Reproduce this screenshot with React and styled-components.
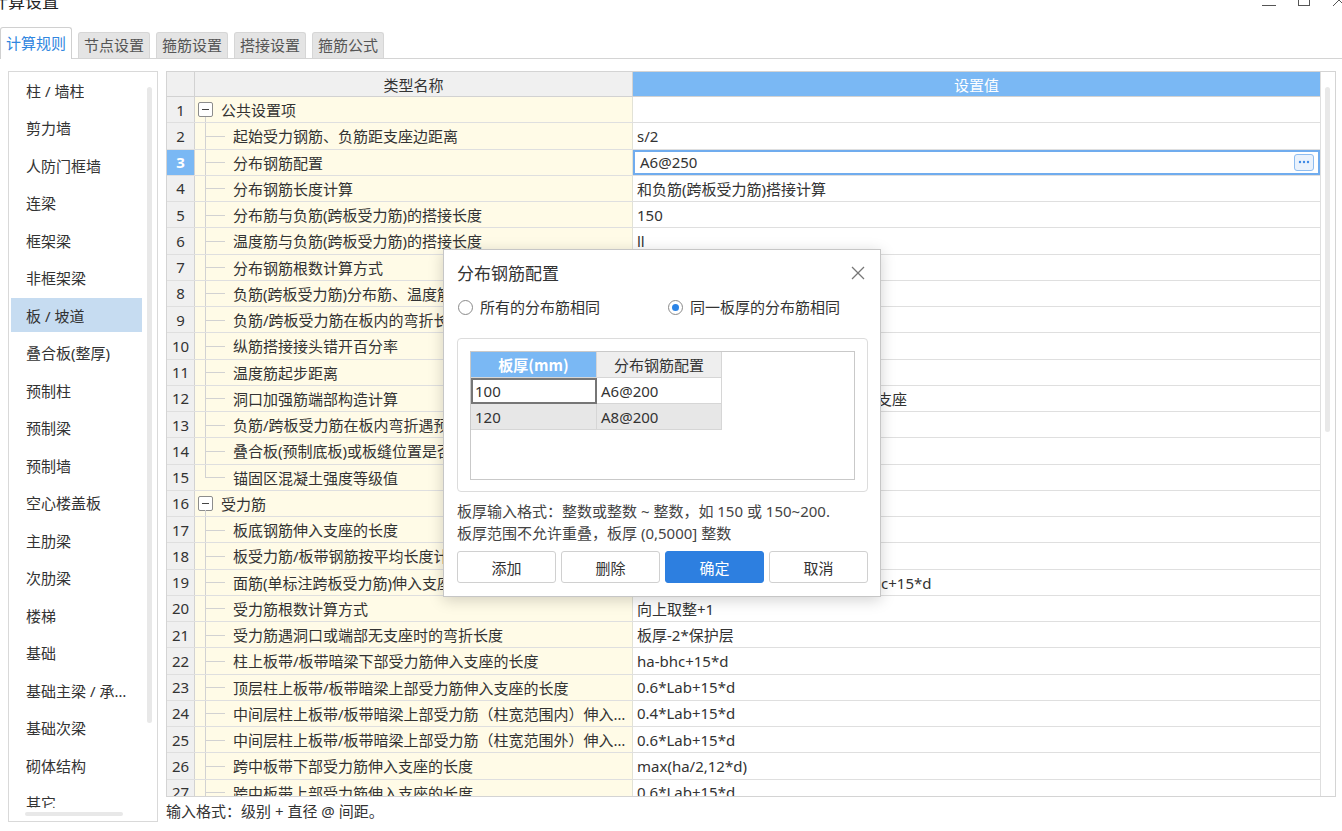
import React from 'react';
import styled, { createGlobalStyle, css } from 'styled-components';

const Global = createGlobalStyle`
  html, body { margin: 0; padding: 0; background: #fff; }
  body {
    font-family: "Noto Sans", "Noto Sans CJK SC", sans-serif;
    color: #333;
    font-size: 15px;
    overflow: hidden;
  }
  * { box-sizing: border-box; }
`;

const Window = styled.div`
  width: 1342px;
  height: 831px;
  position: relative;
  overflow: hidden;
  background: #fff;
  display: flex;
  flex-direction: column;
`;

const TitleBar = styled.div`
  height: 27px;
  flex-shrink: 0;
  display: flex;
  justify-content: space-between;
  align-items: flex-start;
`;

const Title = styled.div`
  font-size: 17px;
  line-height: 20px;
  margin-top: -9px;
  margin-left: -9px;
  color: #222;
  font-family: "Noto Sans CJK SC", sans-serif;
`;

const Controls = styled.div`
  display: flex;
  gap: 21px;
  margin-top: -7px;
  margin-right: -4px;
`;

const TabBar = styled.div`
  height: 32px;
  flex-shrink: 0;
  display: flex;
  align-items: flex-end;
  gap: 6px;
  border-bottom: 1px solid #d4d4d4;
`;

const Tab = styled.div`
  font-size: 15px;
  display: flex;
  align-items: center;
  justify-content: center;
  border: 1px solid #d6d6d6;
  border-bottom: none;
  border-radius: 3px 3px 0 0;
  font-family: "Noto Sans CJK SC", sans-serif;
  ${(p) =>
    p.$active
      ? css`
          height: 32px;
          width: 72px;
          background: #fff;
          color: #2f86e0;
          margin-bottom: -1px;
          border-color: #d0d0d0;
          padding-bottom: 3px;
        `
      : css`
          height: 26px;
          width: 72px;
          background: #e4e4e4;
          color: #555;
          padding-bottom: 2px;
        `}
`;

const Body = styled.div`
  display: flex;
  gap: 8px;
  padding: 12px 6px 0 8px;
  flex: 1;
  min-height: 0;
`;

const Sidebar = styled.div`
  width: 150px;
  height: 751px;
  flex-shrink: 0;
  border: 1px solid #d9d9d9;
  display: grid;
  grid-template-columns: 1fr 12px;
  grid-template-rows: 1fr 13px;
`;

const NavList = styled.div`
  overflow: hidden;
  padding: 1px 0 0 2px;
`;

const NavItem = styled.div`
  width: 131px;
  height: 34px;
  margin-bottom: 3.5px;
  padding: 0 10px 0 15px;
  display: flex;
  align-items: center;
  font-size: 15px;
  color: #333;
  background: ${(p) => (p.$active ? '#c6dcf1' : 'transparent')};
`;

const NavText = styled.span`
  display: block;
  min-width: 0;
  white-space: nowrap;
  overflow: hidden;
  text-overflow: ellipsis;
`;

const VTrack = styled.div`
  padding: 15px 0 0 2px;
`;

const VThumb = styled.div`
  width: 5px;
  height: ${(p) => p.$h}px;
  border-radius: 3px;
  background: #e8e8e8;
`;

const HTrack = styled.div`
  grid-column: 1 / -1;
  padding: 4px 0 0 16px;
`;

const HThumb = styled.div`
  width: 98px;
  height: 4px;
  border-radius: 2px;
  background: #e8e8e8;
`;

const Main = styled.div`
  flex: 1;
  min-width: 0;
  display: flex;
  flex-direction: column;
`;

const TableBox = styled.div`
  height: 726px;
  border: 1px solid #d4d4d4;
  display: flex;
  overflow: hidden;
`;

const Grid = styled.div`
  flex: 1;
  min-width: 0;
  overflow: hidden;
`;

const TableScroll = styled.div`
  width: 15px;
  flex-shrink: 0;
  border-left: 1px solid #dedede;
  padding: 15px 0 0 4px;
`;

const Row = styled.div`
  display: grid;
  grid-template-columns: 28px 438px 1fr;
  height: 26.25px;
  border-bottom: 1px solid #dfdfdf;
`;

const HeaderRow = styled(Row)`
  height: 25px;
  border-bottom-color: #d2d2d2;
`;

const NumCell = styled.div`
  border-right: 1px solid #d2d2d2;
  background: ${(p) => (p.$sel ? '#7ab8f4' : '#f0f0f0')};
  color: ${(p) => (p.$sel ? '#fff' : '#333')};
  font-weight: ${(p) => (p.$sel ? 700 : 400)};
  display: flex;
  align-items: center;
  justify-content: center;
  font-size: 15px;
`;

const HeadCell = styled.div`
  display: flex;
  align-items: center;
  justify-content: center;
  font-size: 15px;
  font-family: "Noto Sans CJK SC", sans-serif;
  background: ${(p) => (p.$blue ? '#7ab8f4' : '#f0f0f0')};
  color: ${(p) => (p.$blue ? '#fff' : '#333')};
  border-right: ${(p) => (p.$blue ? 'none' : '1px solid #d2d2d2')};
`;

const NameCell = styled.div`
  border-right: 1px solid #e2e2d6;
  background: #fffbe7;
  display: flex;
  align-items: center;
  min-width: 0;
`;

const NameText = styled.span`
  display: block;
  min-width: 0;
  white-space: nowrap;
  overflow: hidden;
  text-overflow: ellipsis;
  padding-right: 2px;
  font-size: 15px;
  color: #333;
`;

const Gutter = styled.div`
  width: 38px;
  align-self: stretch;
  position: relative;
  flex-shrink: 0;
  &::before {
    content: '';
    position: absolute;
    left: 10px;
    top: 0;
    width: 1px;
    height: ${(p) => (p.$last ? '50%' : '100%')};
    background: #d2d2d2;
  }
  &::after {
    content: '';
    position: absolute;
    left: 10px;
    top: 50%;
    width: 20px;
    height: 1px;
    background: #d2d2d2;
  }
`;

const GroupGutter = styled.div`
  width: 26px;
  align-self: stretch;
  flex-shrink: 0;
  display: flex;
  flex-direction: column;
  align-items: flex-start;
  justify-content: center;
  padding-left: 3px;
  position: relative;
  &::after {
    content: '';
    position: absolute;
    left: 10px;
    top: calc(50% + 7px);
    width: 1px;
    bottom: 0;
    background: #d2d2d2;
  }
`;

const Toggle = styled.div`
  width: 15px;
  height: 15px;
  border: 1px solid #8c8c8c;
  border-radius: 2px;
  background: #fff;
  display: flex;
  align-items: center;
  justify-content: center;
  &::before {
    content: '';
    width: 7px;
    height: 1px;
    background: #444;
  }
`;

const ValueCell = styled.div`
  display: flex;
  align-items: center;
  justify-content: space-between;
  min-width: 0;
  padding-left: 4px;
  background: #fff;
  font-size: 15px;
  white-space: nowrap;
  overflow: hidden;
  ${(p) =>
    p.$sel &&
    css`
      border: 2px solid #70acee;
      padding-left: 5px;
      padding-right: 4px;
    `}
`;

const MoreBtn = styled.div`
  width: 20px;
  height: 17px;
  border: 1.5px solid #8fbdf0;
  border-radius: 3px;
  background: #eaf2fc;
  display: flex;
  align-items: center;
  justify-content: center;
`;

const FootHint = styled.div`
  margin-top: 4px;
  line-height: 20px;
  font-size: 15px;
  color: #333;
`;

const Dialog = styled.div`
  position: absolute;
  left: 443px;
  top: 249px;
  width: 438px;
  height: 348px;
  background: #fff;
  border: 1px solid #c6c6c6;
  box-shadow: 0 3px 14px rgba(0, 0, 0, 0.18);
  padding: 0 12px 0 13px;
  display: flex;
  flex-direction: column;
`;

const DialogHeader = styled.div`
  height: 45px;
  display: flex;
  align-items: center;
  justify-content: space-between;
`;

const DialogTitle = styled.div`
  font-size: 17px;
  color: #333;
  font-family: "Noto Sans CJK SC", sans-serif;
`;

const CloseBtn = styled.div`
  margin-right: 3px;
  display: flex;
`;

const RadioRow = styled.div`
  height: 27px;
  padding-bottom: 3px;
  display: grid;
  grid-template-columns: 210px 1fr;
  align-items: center;
`;

const RadioOpt = styled.label`
  display: flex;
  align-items: center;
  gap: 7px;
  padding-left: 1px;
  font-size: 15px;
  line-height: 20px;
  color: #333;
`;

const RadioDot = styled.span`
  width: 15px;
  height: 15px;
  border-radius: 50%;
  border: 1px solid #8a8a8a;
  background: #fff;
  display: flex;
  align-items: center;
  justify-content: center;
  &::before {
    content: '';
    width: 7px;
    height: 7px;
    border-radius: 50%;
    background: ${(p) => (p.$on ? '#2b84e6' : 'transparent')};
  }
`;

const GroupBox = styled.div`
  margin-top: 16px;
  height: 154px;
  border: 1px solid #dcdcdc;
  border-radius: 4px;
  padding: 12px 12px 11px 12px;
`;

const InnerGrid = styled.div`
  height: 129px;
  border: 1px solid #c9c9c9;
  background: #fff;
`;

const DRow = styled.div`
  display: grid;
  grid-template-columns: 126px 125px;
  height: 26px;
`;

const DCell = styled.div`
  display: flex;
  align-items: center;
  font-size: 15px;
  border-right: 1px solid #d6d6d6;
  border-bottom: 1px solid #d6d6d6;
  padding-left: 4px;
  color: #333;
  background: ${(p) => p.$bg || '#fff'};
  ${(p) =>
    p.$head &&
    css`
      justify-content: center;
      padding-left: 0;
      font-family: "Noto Sans CJK SC", sans-serif;
    `}
  ${(p) =>
    p.$blue &&
    css`
      color: #fff;
      font-weight: 700;
    `}
  ${(p) =>
    p.$focus &&
    css`
      border: 2px solid #767676;
      padding-left: 2px;
    `}
`;

const HintText = styled.div`
  margin-top: 8px;
  font-size: 15px;
  line-height: 22px;
  color: #444;
`;

const Buttons = styled.div`
  margin-top: 7px;
  display: grid;
  grid-template-columns: repeat(4, 1fr);
  gap: 5px;
`;

const Btn = styled.div`
  height: 32px;
  display: flex;
  align-items: center;
  justify-content: center;
  font-size: 15px;
  border-radius: 3px;
  border: 1px solid ${(p) => (p.$primary ? '#2d7fe0' : '#d0d0d0')};
  background: ${(p) => (p.$primary ? '#2d7fe0' : '#fff')};
  color: ${(p) => (p.$primary ? '#fff' : '#333')};
`;

const navItems = [
  '柱 / 墙柱', '剪力墙', '人防门框墙', '连梁', '框架梁', '非框架梁', '板 / 坡道',
  '叠合板(整厚)', '预制柱', '预制梁', '预制墙', '空心楼盖板', '主肋梁', '次肋梁',
  '楼梯', '基础', '基础主梁 / 承台梁', '基础次梁', '砌体结构', '其它',
];

const rows = [
  { name: '公共设置项', value: '', group: true },
  { name: '起始受力钢筋、负筋距支座边距离', value: 's/2' },
  { name: '分布钢筋配置', value: 'A6@250', sel: true },
  { name: '分布钢筋长度计算', value: '和负筋(跨板受力筋)搭接计算' },
  { name: '分布筋与负筋(跨板受力筋)的搭接长度', value: '150' },
  { name: '温度筋与负筋(跨板受力筋)的搭接长度', value: 'll' },
  { name: '分布钢筋根数计算方式', value: '向下取整+1' },
  { name: '负筋(跨板受力筋)分布筋、温度筋是否带弯勾', value: '否' },
  { name: '负筋/跨板受力筋在板内的弯折长度', value: '板厚-2*保护层' },
  { name: '纵筋搭接接头错开百分率', value: '50%' },
  { name: '温度筋起步距离', value: 's' },
  { name: '洞口加强筋端部构造计算', value: '洞口加强筋两端均锚固伸入至板内或支座' },
  { name: '负筋/跨板受力筋在板内弯折遇预制板时的处理', value: '不弯折' },
  { name: '叠合板(预制底板)或板缝位置是否计算负筋', value: '是' },
  { name: '锚固区混凝土强度等级值', value: 'C30', last: true },
  { name: '受力筋', value: '', group: true },
  { name: '板底钢筋伸入支座的长度', value: 'max(ha/2,5*d)' },
  { name: '板受力筋/板带钢筋按平均长度计算', value: '否' },
  { name: '面筋(单标注跨板受力筋)伸入支座的锚固长度', value: '能直锚就直锚,否则按公式计算:ha-bhc+15*d' },
  { name: '受力筋根数计算方式', value: '向上取整+1' },
  { name: '受力筋遇洞口或端部无支座时的弯折长度', value: '板厚-2*保护层' },
  { name: '柱上板带/板带暗梁下部受力筋伸入支座的长度', value: 'ha-bhc+15*d' },
  { name: '顶层柱上板带/板带暗梁上部受力筋伸入支座的长度', value: '0.6*Lab+15*d' },
  { name: '中间层柱上板带/板带暗梁上部受力筋（柱宽范围内）伸入支座的长度', value: '0.4*Lab+15*d' },
  { name: '中间层柱上板带/板带暗梁上部受力筋（柱宽范围外）伸入支座的长度', value: '0.6*Lab+15*d' },
  { name: '跨中板带下部受力筋伸入支座的长度', value: 'max(ha/2,12*d)' },
  { name: '跨中板带上部受力筋伸入支座的长度', value: '0.6*Lab+15*d' },
];

const tabs = ['计算规则', '节点设置', '箍筋设置', '搭接设置', '箍筋公式'];

export default function App() {
  return (
    <Window>
      <Global />
      <TitleBar>
        <Title>计算设置</Title>
        <Controls>
          <svg width="14" height="14" viewBox="0 0 14 14">
            <line x1="0" y1="12.5" x2="14" y2="12.5" stroke="#555" strokeWidth="1" />
          </svg>
          <svg width="14" height="14" viewBox="0 0 14 14">
            <rect x="1.5" y="1.5" width="11" height="11" fill="none" stroke="#555" strokeWidth="1" />
          </svg>
          <svg width="14" height="14" viewBox="0 0 14 14">
            <line x1="1" y1="1" x2="13" y2="13" stroke="#555" strokeWidth="1" />
            <line x1="13" y1="1" x2="1" y2="13" stroke="#555" strokeWidth="1" />
          </svg>
        </Controls>
      </TitleBar>
      <TabBar>
        {tabs.map((t, i) => (
          <Tab key={t} $active={i === 0}>{t}</Tab>
        ))}
      </TabBar>
      <Body>
        <Sidebar>
          <NavList>
            {navItems.map((t) => (
              <NavItem key={t} $active={t === '板 / 坡道'}>
                <NavText>{t}</NavText>
              </NavItem>
            ))}
          </NavList>
          <VTrack>
            <VThumb $h={636} />
          </VTrack>
          <HTrack>
            <HThumb />
          </HTrack>
        </Sidebar>
        <Main>
          <TableBox>
            <Grid>
              <HeaderRow>
                <NumCell />
                <HeadCell>类型名称</HeadCell>
                <HeadCell $blue>设置值</HeadCell>
              </HeaderRow>
              {rows.map((r, i) => (
                <Row key={i}>
                  <NumCell $sel={r.sel}>{i + 1}</NumCell>
                  <NameCell>
                    {r.group ? (
                      <GroupGutter>
                        <Toggle />
                      </GroupGutter>
                    ) : (
                      <Gutter $last={r.last} />
                    )}
                    <NameText>{r.name}</NameText>
                  </NameCell>
                  <ValueCell $sel={r.sel}>
                    <span>{r.value}</span>
                    {r.sel && (
                      <MoreBtn>
                        <svg width="12" height="4" viewBox="0 0 12 4">
                          <circle cx="2" cy="2" r="1.2" fill="#3d8ae6" />
                          <circle cx="6" cy="2" r="1.2" fill="#3d8ae6" />
                          <circle cx="10" cy="2" r="1.2" fill="#3d8ae6" />
                        </svg>
                      </MoreBtn>
                    )}
                  </ValueCell>
                </Row>
              ))}
            </Grid>
            <TableScroll>
              <VThumb $h={345} />
            </TableScroll>
          </TableBox>
          <FootHint>输入格式：级别 + 直径 @ 间距。</FootHint>
        </Main>
      </Body>

      <Dialog>
        <DialogHeader>
          <DialogTitle>分布钢筋配置</DialogTitle>
          <CloseBtn>
            <svg width="14" height="14" viewBox="0 0 14 14">
              <line x1="1" y1="1" x2="13" y2="13" stroke="#777" strokeWidth="1.3" />
              <line x1="13" y1="1" x2="1" y2="13" stroke="#777" strokeWidth="1.3" />
            </svg>
          </CloseBtn>
        </DialogHeader>
        <RadioRow>
          <RadioOpt>
            <RadioDot />
            所有的分布筋相同
          </RadioOpt>
          <RadioOpt>
            <RadioDot $on />
            同一板厚的分布筋相同
          </RadioOpt>
        </RadioRow>
        <GroupBox>
          <InnerGrid>
            <DRow>
              <DCell $head $blue $bg="#7ab8f4">板厚(mm)</DCell>
              <DCell $head $bg="#eeeeee">分布钢筋配置</DCell>
            </DRow>
            <DRow>
              <DCell $focus>100</DCell>
              <DCell>A6@200</DCell>
            </DRow>
            <DRow>
              <DCell $bg="#e7e7e7">120</DCell>
              <DCell $bg="#e7e7e7">A8@200</DCell>
            </DRow>
          </InnerGrid>
        </GroupBox>
        <HintText>
          <div>板厚输入格式：整数或整数 ~ 整数，如 150 或 150~200.</div>
          <div>板厚范围不允许重叠，板厚 (0,5000] 整数</div>
        </HintText>
        <Buttons>
          <Btn>添加</Btn>
          <Btn>删除</Btn>
          <Btn $primary>确定</Btn>
          <Btn>取消</Btn>
        </Buttons>
      </Dialog>
    </Window>
  );
}
